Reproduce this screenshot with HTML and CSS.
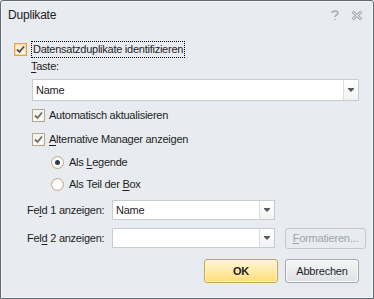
FILE: index.html
```html
<!DOCTYPE html>
<html lang="de">
<head>
    <meta charset="UTF-8">
    <title>Duplikate</title>
    <link rel="stylesheet" href="styles.css">
</head>
<body>
<div class="dialog">
    <div class="titlebar">
        <span class="title">Duplikate</span>
        <span class="title-buttons">
            <svg width="10" height="12" viewBox="0 0 10 12"><path d="M2 4 C2 1.5 8 1.5 8 4 C8 6 5 6 5 8 M5 10 V11" fill="none" stroke="#a9adb3" stroke-width="1.6"/></svg>
            <svg width="12" height="11" viewBox="0 0 12 11"><path d="M1.5 1.5 L10.5 9.5 M10.5 1.5 L1.5 9.5" stroke="#9da2a8" stroke-width="3"/><path d="M1.5 1.5 L10.5 9.5 M10.5 1.5 L1.5 9.5" stroke="#fff" stroke-width="1"/></svg>
        </span>
    </div>
    <div class="content">
        <div class="row row-main">
            <span class="check focus"><svg width="9" height="9" viewBox="0 0 9 9"><path d="M1 4.5 L3.5 7 L8 1.5" fill="none" stroke="#4d4d4d" stroke-width="1.8"/></svg></span>
            <span class="label focused">Datensatzduplikate identifizieren</span>
        </div>
        <div class="row row-taste"><span class="label"><u>T</u>aste:</span></div>
        <div class="combo combo-wide">
            <span class="combo-text">Name</span>
            <span class="combo-btn"><span class="arrow"></span></span>
        </div>
        <div class="row row-sub">
            <span class="check"><svg width="9" height="9" viewBox="0 0 9 9"><path d="M1 4.5 L3.5 7 L8 1.5" fill="none" stroke="#6b6b6b" stroke-width="1.8"/></svg></span>
            <span class="label">Automatisch aktualisieren</span>
        </div>
        <div class="row row-sub">
            <span class="check"><svg width="9" height="9" viewBox="0 0 9 9"><path d="M1 4.5 L3.5 7 L8 1.5" fill="none" stroke="#6b6b6b" stroke-width="1.8"/></svg></span>
            <span class="label"><u>A</u>lternative Manager anzeigen</span>
        </div>
        <div class="row row-radio">
            <span class="radio on"></span>
            <span class="label">Als <u>L</u>egende</span>
        </div>
        <div class="row row-radio">
            <span class="radio"></span>
            <span class="label">Als Teil der <u>B</u>ox</span>
        </div>
        <div class="row row-field first">
            <span class="label field-label">Fe<u>l</u>d 1 anzeigen:</span>
            <div class="combo combo-small">
                <span class="combo-text">Name</span>
                <span class="combo-btn"><span class="arrow"></span></span>
            </div>
        </div>
        <div class="row row-field">
            <span class="label field-label">Fel<u>d</u> 2 anzeigen:</span>
            <div class="combo combo-small">
                <span class="combo-text"></span>
                <span class="combo-btn"><span class="arrow"></span></span>
            </div>
            <button class="btn disabled"><u>F</u>ormatieren...</button>
        </div>
        <div class="footer">
            <button class="btn ok">OK</button>
            <button class="btn">Abbrechen</button>
        </div>
    </div>
</div>
</body>
</html>
```

FILE: styles.css
```css
body {
    margin: 0;
    font-family: 'Liberation Sans', Arial, sans-serif;
    font-size: 11px;
    letter-spacing: -0.25px;
    color: #1e1e1e;
    background-color: #e8ebef;
}

.dialog {
    box-sizing: border-box;
    width: 374px;
    height: 299px;
    border: 1px solid #5e6873;
    border-radius: 3px 3px 0 0;
    background-color: #e8ebef;
    box-shadow: inset 0 0 0 1px #f4f6f8;
}

.titlebar {
    height: 28px;
    display: flex;
    align-items: center;
    justify-content: space-between;
    padding: 0 10px 0 7px;
}

.title {
    font-size: 12px;
    letter-spacing: -0.2px;
    color: #202020;
}

.title-buttons {
    display: flex;
    align-items: center;
    gap: 11px;
}

.content {
    padding: 0 0 0 13px;
}

.row {
    display: flex;
    align-items: center;
    height: 24px;
}

.label {
    white-space: nowrap;
}

.label u {
    text-decoration-thickness: 1px;
    text-underline-offset: 2px;
}

.row-main {
    margin-top: 8px;
    height: 24px;
}

.row-main .label {
    margin-left: 5px;
}

.focused {
    outline: 1px dotted #000;
    outline-offset: 0;
    padding: 0 1px;
    line-height: 15px;
}

.row-taste {
    height: 10px;
    padding-left: 17px;
}

.check {
    box-sizing: border-box;
    width: 13px;
    height: 13px;
    border: 1px solid #b7a48c;
    background: linear-gradient(#f4efe9, #ffffff);
    box-shadow: inset 0 0 0 1px #f9f6f2;
    display: flex;
    align-items: center;
    justify-content: center;
}

.check.focus {
    border-color: #e4a24f;
    background: linear-gradient(#fde9c9, #fff8ec);
    box-shadow: inset 0 0 0 1px #fbd79e;
}

.combo {
    box-sizing: border-box;
    display: flex;
    align-items: center;
    height: 22px;
    background-color: #fff;
    border: 1px solid #c9cbce;
}

.combo-wide {
    width: 327px;
    margin: 8px 0 2px 18px;
}

.combo-small {
    width: 163px;
    height: 20px;
}

.combo-text {
    flex: 1;
    padding-left: 3px;
}

.combo-btn {
    width: 14px;
    height: 100%;
    border-left: 1px solid #dcdde0;
    background: linear-gradient(#ffffff, #f1f2f4);
    display: flex;
    align-items: center;
    justify-content: center;
}

.arrow {
    width: 0;
    height: 0;
    border-left: 3px solid transparent;
    border-right: 3px solid transparent;
    border-top: 3px solid #5c5c5c;
    box-shadow: 0 -1px 0 #5c5c5c;
}

.row-sub {
    padding-left: 18px;
}

.row-sub .label {
    margin-left: 4px;
}

.row-radio {
    padding-left: 37px;
    height: 22px;
}

.row-radio .label {
    margin-left: 5px;
}

.radio {
    box-sizing: border-box;
    width: 13px;
    height: 13px;
    border-radius: 50%;
    border: 1px solid #c9a78a;
    background: radial-gradient(circle, #ffffff 40%, #f1e8df 100%);
    display: flex;
    align-items: center;
    justify-content: center;
}

.radio.on::after {
    content: "";
    width: 5px;
    height: 5px;
    border-radius: 50%;
    background: #2f3a4a;
}

.row-field {
    height: 28px;
}

.row-field.first {
    margin-top: 1px;
}

.field-label {
    width: 85px;
    padding-left: 13px;
}

.btn {
    box-sizing: border-box;
    font-family: inherit;
    font-size: 11px;
    letter-spacing: -0.2px;
    color: #1e1e1e;
    border: 1px solid #a5a9ae;
    border-radius: 3px;
    background: linear-gradient(#f5f6f7, #dfe1e4);
    box-shadow: inset 0 0 0 1px #fafafa;
    padding: 0;
}

.btn.disabled {
    width: 81px;
    height: 21px;
    margin-left: 10px;
    color: #9da3aa;
    border-color: #c4c8cc;
    background: #e8ebef;
    box-shadow: none;
}

.footer {
    display: flex;
    justify-content: flex-end;
    gap: 7px;
    padding: 7px 14px 0 0;
}

.footer .btn {
    width: 74px;
    height: 24px;
}

.btn.ok {
    font-weight: bold;
    border-color: #c9a751;
    background: linear-gradient(#fff6d7, #ffdd7a);
    box-shadow: inset 0 0 0 1px #fff3cd;
}
```
